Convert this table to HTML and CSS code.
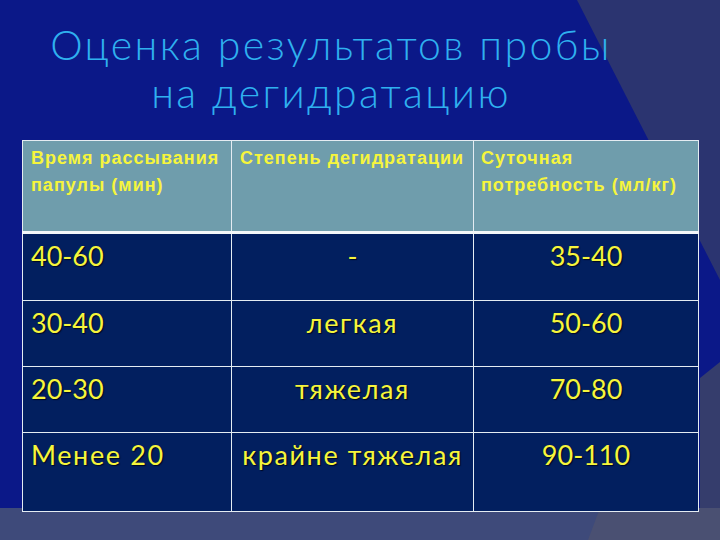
FILE: index.html
```html
<!DOCTYPE html>
<html lang="ru">
<head>
<meta charset="utf-8">
<link rel="stylesheet" href="styles.css">
</head>
<body>
<div class="slide">
  <svg class="backdrop" width="720" height="540" viewBox="0 0 720 540" aria-hidden="true">
    <rect x="0" y="0" width="720" height="540" fill="#0b1888"/>
    <polygon points="577,0 720,0 720,280" fill="#2b3470"/>
    <polygon points="700,378 720,362 720,540 700,540" fill="#353d6c"/>
    <rect x="0" y="508" width="720" height="32" fill="#3e4a7a"/>
    <polygon points="600,508 720,508 720,540 588,540" fill="#4a5072"/>
  </svg>
  <h1 class="title">Оценка результатов пробы<br>на дегидратацию</h1>
  <table class="grid">
    <colgroup>
      <col class="c1"><col class="c2"><col class="c3">
    </colgroup>
    <thead>
      <tr>
        <th>Время рассывания папулы (мин)</th>
        <th>Степень дегидратации</th>
        <th>Суточная потребность (мл/кг)</th>
      </tr>
    </thead>
    <tbody>
      <tr class="r1"><td>40-60</td><td class="mid">-</td><td class="mid">35-40</td></tr>
      <tr class="r2"><td>30-40</td><td class="mid word">легкая</td><td class="mid">50-60</td></tr>
      <tr class="r3"><td>20-30</td><td class="mid word">тяжелая</td><td class="mid">70-80</td></tr>
      <tr class="r4"><td class="word">Менее 20</td><td class="mid word">крайне тяжелая</td><td class="mid">90-110</td></tr>
    </tbody>
  </table>
</div>
</body>
</html>
```
FILE: styles.css
```css
html, body {
  margin: 0;
  padding: 0;
}
body {
  width: 720px;
  height: 540px;
  overflow: hidden;
  background: #0b1888;
}
.slide {
  position: relative;
  width: 720px;
  height: 540px;
  overflow: hidden;
}
.backdrop {
  position: absolute;
  left: 0;
  top: 0;
  z-index: 0;
}
.title {
  position: relative;
  z-index: 1;
  margin: 0;
  padding-top: 21px;
  width: 662px;
  text-align: center;
  font-family: "Lato", "DejaVu Sans", sans-serif;
  font-weight: 300;
  font-size: 41px;
  line-height: 48px;
  letter-spacing: 2.4px;
  color: #2fb0ef;
}
.grid {
  position: relative;
  z-index: 1;
  margin: 23px 0 0 22px;
  width: 676px;
  border-collapse: collapse;
  table-layout: fixed;
}
.c1 { width: 209px; }
.c2 { width: 242px; }
.c3 { width: 225px; }
.grid th,
.grid td {
  border: 1px solid #e4ecf2;
  vertical-align: top;
  text-align: left;
  color: #f6f53c;
}
.grid th {
  height: 82px;
  padding: 4px 4px 4px 8px;
  background: #6f9dac;
  font-family: "Liberation Sans", Arial, sans-serif;
  font-weight: 700;
  font-size: 18px;
  line-height: 27px;
  letter-spacing: 1px;
  border-bottom: 3px solid #f2f6f8;
}
.grid th:nth-child(3) {
  padding-left: 7px;
}
.grid td {
  background: #021f5f;
  padding: 4px 8px 0 8px;
  font-family: "Lato", "DejaVu Sans", sans-serif;
  font-size: 27px;
  line-height: 36px;
  text-shadow: 1px 1px 1px #000820;
}
.grid td.mid {
  text-align: center;
}
.grid td.word {
  letter-spacing: 1.6px;
}
.r1 td { height: 62px; }
.r2 td { height: 61px; }
.r3 td { height: 61px; }
.r4 td { height: 74px; }
```
